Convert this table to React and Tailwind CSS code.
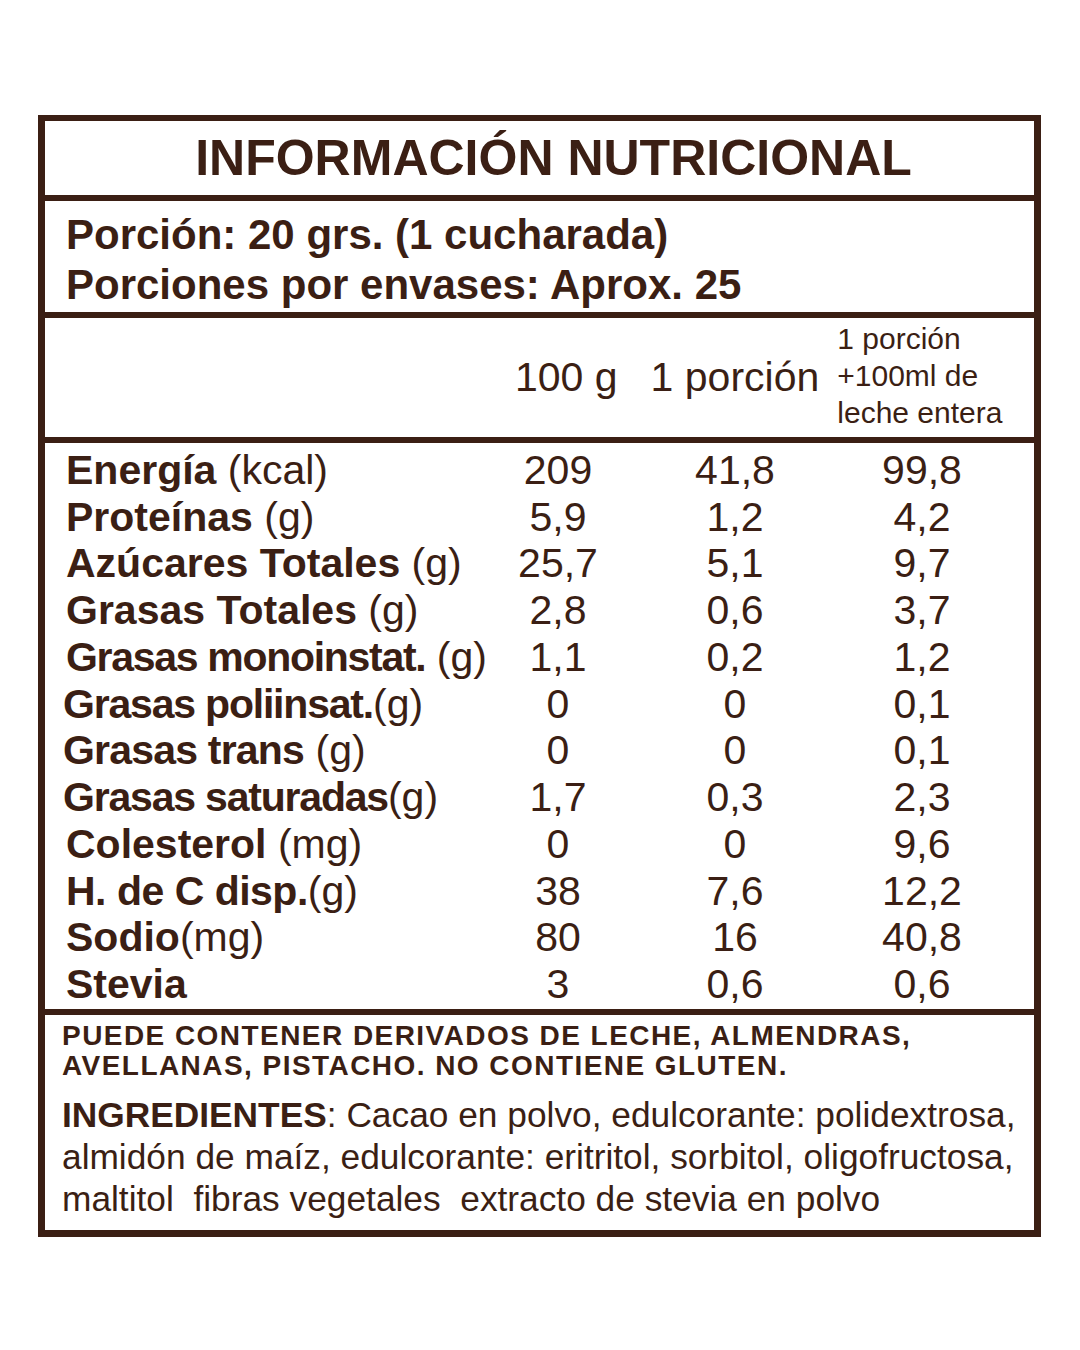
const rows = [
  { name: "Energía", unit: " (kcal)", v: ["209", "41,8", "99,8"] },
  { name: "Proteínas", unit: " (g)", v: ["5,9", "1,2", "4,2"] },
  { name: "Azúcares Totales", unit: " (g)", v: ["25,7", "5,1", "9,7"] },
  { name: "Grasas Totales", unit: " (g)", v: ["2,8", "0,6", "3,7"] },
  { name: "Grasas monoinstat.", unit: " (g)", v: ["1,1", "0,2", "1,2"], track: "tracking-[-1.3px]" },
  { name: "Grasas poliinsat.", unit: "(g)", v: ["0", "0", "0,1"], track: "tracking-[-1.2px]", shift: true },
  { name: "Grasas trans", unit: " (g)", v: ["0", "0", "0,1"], track: "tracking-[-0.8px]", shift: true },
  { name: "Grasas saturadas", unit: "(g)", v: ["1,7", "0,3", "2,3"], track: "tracking-[-1.2px]", shift: true },
  { name: "Colesterol", unit: " (mg)", v: ["0", "0", "9,6"] },
  { name: "H. de C disp.", unit: "(g)", v: ["38", "7,6", "12,2"], track: "tracking-[-0.5px]" },
  { name: "Sodio", unit: "(mg)", v: ["80", "16", "40,8"] },
  { name: "Stevia", unit: "", v: ["3", "0,6", "0,6"] },
];

const App = () => {
  return (
    <div className="min-h-screen bg-white pt-[115px] font-['Liberation_Sans',Arial,sans-serif] text-[#3b1f14]">
      <div className="mx-[38px] w-[1003px] border-[7px] border-t-[6px] border-[#3b1f14]">
        {/* Title */}
        <div className="flex h-[80px] items-center justify-center border-b-[6px] border-[#3b1f14] pl-[28px] text-[50px] font-bold leading-none">
          INFORMACIÓN NUTRICIONAL
        </div>

        {/* Portion */}
        <div className="h-[117px] border-b-[6px] border-[#3b1f14] pl-[21px] pt-[9px] text-[42px] font-bold leading-[50px]">
          <p>Porción: 20 grs. (1 cucharada)</p>
          <p>Porciones por envases: Aprox. 25</p>
        </div>

        {/* Column headers */}
        <div className="flex h-[125px] items-center border-b-[6px] border-[#3b1f14]">
          <div className="w-[470px]" />
          <span className="text-[41px] leading-[47px]">100 g</span>
          <span className="ml-[33px] text-[41px] leading-[47px]">1 porción</span>
          <div className="ml-[18px] -mt-[4px] text-[30px] leading-[37px]">
            <p>1 porción</p>
            <p>+100ml de</p>
            <p>leche entera</p>
          </div>
        </div>

        {/* Values */}
        <div className="border-b-[6px] border-[#3b1f14] pb-[1px] pt-[4px]">
          {rows.map((r) => (
            <div key={r.name} className="flex h-[46.75px] items-center text-[41px] leading-none">
              <div className={`${r.shift ? "pl-[18px]" : "pl-[21px]"} w-[448px] whitespace-nowrap`}>
                <span className={`font-bold ${r.track || ""}`}>{r.name}</span>
                <span>{r.unit}</span>
              </div>
              <span className="w-[130px] text-center">{r.v[0]}</span>
              <span className="w-[224px] text-center">{r.v[1]}</span>
              <span className="w-[150px] text-center">{r.v[2]}</span>
            </div>
          ))}
        </div>

        {/* Allergens and ingredients */}
        <div className="h-[215px] pl-[17px] pt-[6px]">
          <p className="text-[28px] font-bold leading-[30px] tracking-[1.45px]">
            PUEDE CONTENER DERIVADOS DE LECHE, ALMENDRAS,
            <br />
            AVELLANAS, PISTACHO. NO CONTIENE GLUTEN.
          </p>
          <p className="mt-[13px] text-[35.3px] leading-[42px]">
            <span className="font-bold">INGREDIENTES</span>: Cacao en polvo, edulcorante: polidextrosa,
            <br />
            almidón de maíz, edulcorante: eritritol, sorbitol, oligofructosa,
            <br />
            maltitol&nbsp; fibras vegetales&nbsp; extracto de stevia en polvo
          </p>
        </div>
      </div>
    </div>
  );
};

export default App;
